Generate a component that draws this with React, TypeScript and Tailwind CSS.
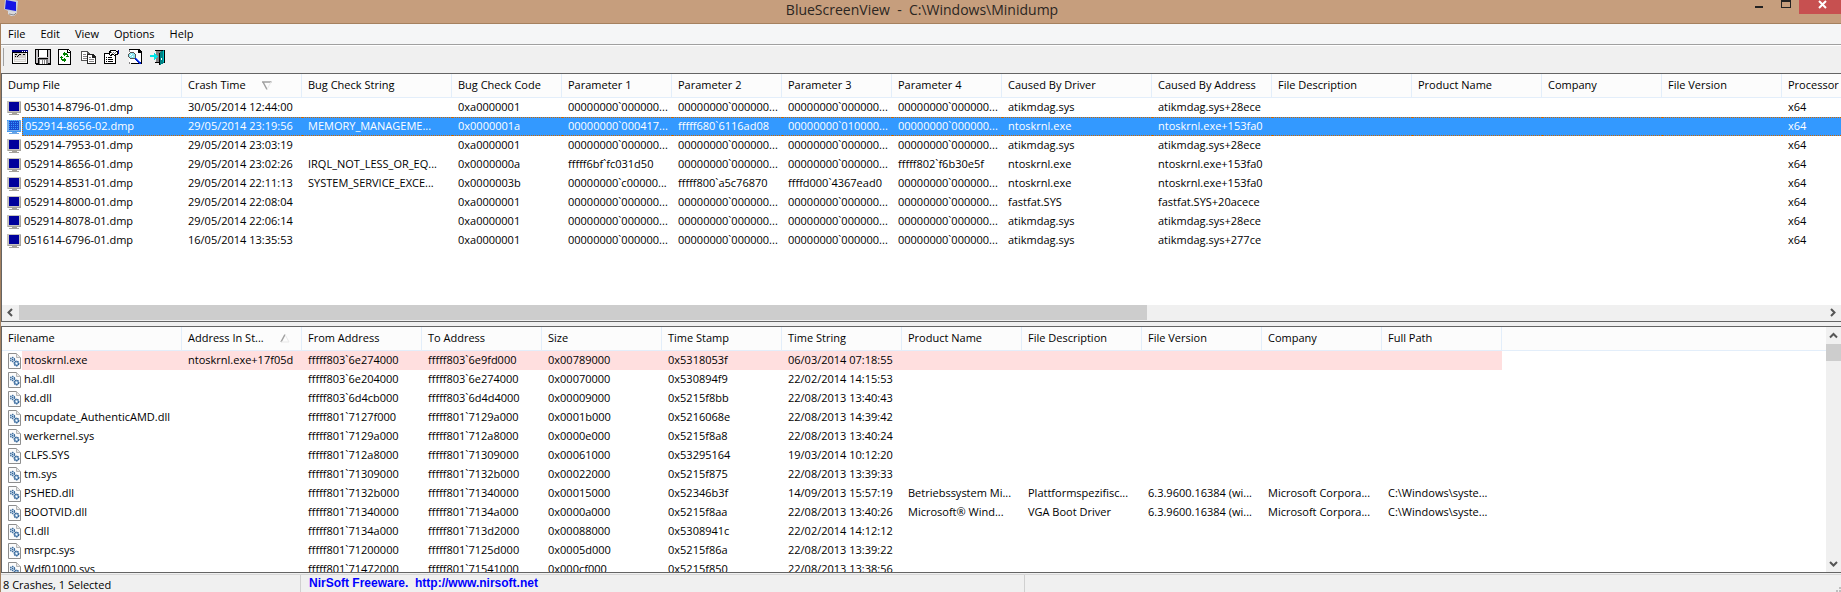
import type { ReactNode } from 'react';

type Column = { label: string; width?: string; sort?: 'asc' | 'desc' };

const crashColumns: Column[] = [
  { label: 'Dump File', width: 'w-[180px]' },
  { label: 'Crash Time', width: 'w-[120px]', sort: 'desc' },
  { label: 'Bug Check String', width: 'w-[150px]' },
  { label: 'Bug Check Code', width: 'w-[110px]' },
  { label: 'Parameter 1', width: 'w-[110px]' },
  { label: 'Parameter 2', width: 'w-[110px]' },
  { label: 'Parameter 3', width: 'w-[110px]' },
  { label: 'Parameter 4', width: 'w-[110px]' },
  { label: 'Caused By Driver', width: 'w-[150px]' },
  { label: 'Caused By Address', width: 'w-[120px]' },
  { label: 'File Description', width: 'w-[140px]' },
  { label: 'Product Name', width: 'w-[130px]' },
  { label: 'Company', width: 'w-[120px]' },
  { label: 'File Version', width: 'w-[120px]' },
  { label: 'Processor' },
];

const Z = '00000000`000000...';

const crashes = [
  ['053014-8796-01.dmp', '30/05/2014 12:44:00', '', '0xa0000001', Z, Z, Z, Z, 'atikmdag.sys', 'atikmdag.sys+28ece'],
  ['052914-8656-02.dmp', '29/05/2014 23:19:56', 'MEMORY_MANAGEME...', '0x0000001a', '00000000`000417...', 'fffff680`6116ad08', '00000000`010000...', Z, 'ntoskrnl.exe', 'ntoskrnl.exe+153fa0'],
  ['052914-7953-01.dmp', '29/05/2014 23:03:19', '', '0xa0000001', Z, Z, Z, Z, 'atikmdag.sys', 'atikmdag.sys+28ece'],
  ['052914-8656-01.dmp', '29/05/2014 23:02:26', 'IRQL_NOT_LESS_OR_EQ...', '0x0000000a', 'fffff6bf`fc031d50', Z, Z, 'fffff802`f6b30e5f', 'ntoskrnl.exe', 'ntoskrnl.exe+153fa0'],
  ['052914-8531-01.dmp', '29/05/2014 22:11:13', 'SYSTEM_SERVICE_EXCE...', '0x0000003b', '00000000`c00000...', 'fffff800`a5c76870', 'ffffd000`4367ead0', Z, 'ntoskrnl.exe', 'ntoskrnl.exe+153fa0'],
  ['052914-8000-01.dmp', '29/05/2014 22:08:04', '', '0xa0000001', Z, Z, Z, Z, 'fastfat.SYS', 'fastfat.SYS+20acece'],
  ['052914-8078-01.dmp', '29/05/2014 22:06:14', '', '0xa0000001', Z, Z, Z, Z, 'atikmdag.sys', 'atikmdag.sys+28ece'],
  ['051614-6796-01.dmp', '16/05/2014 13:35:53', '', '0xa0000001', Z, Z, Z, Z, 'atikmdag.sys', 'atikmdag.sys+277ce'],
].map((row) => [...row, '', '', '', '', 'x64']);

const driverColumns: Column[] = [
  { label: 'Filename', width: 'w-[180px]' },
  { label: 'Address In St...', width: 'w-[120px]', sort: 'asc' },
  { label: 'From Address', width: 'w-[120px]' },
  { label: 'To Address', width: 'w-[120px]' },
  { label: 'Size', width: 'w-[120px]' },
  { label: 'Time Stamp', width: 'w-[120px]' },
  { label: 'Time String', width: 'w-[120px]' },
  { label: 'Product Name', width: 'w-[120px]' },
  { label: 'File Description', width: 'w-[120px]' },
  { label: 'File Version', width: 'w-[120px]' },
  { label: 'Company', width: 'w-[120px]' },
  { label: 'Full Path', width: 'w-[120px]' },
];

const drivers = [
  ['ntoskrnl.exe', 'ntoskrnl.exe+17f05d', 'fffff803`6e274000', 'fffff803`6e9fd000', '0x00789000', '0x5318053f', '06/03/2014 07:18:55'],
  ['hal.dll', '', 'fffff803`6e204000', 'fffff803`6e274000', '0x00070000', '0x530894f9', '22/02/2014 14:15:53'],
  ['kd.dll', '', 'fffff803`6d4cb000', 'fffff803`6d4d4000', '0x00009000', '0x5215f8bb', '22/08/2013 13:40:43'],
  ['mcupdate_AuthenticAMD.dll', '', 'fffff801`7127f000', 'fffff801`7129a000', '0x0001b000', '0x5216068e', '22/08/2013 14:39:42'],
  ['werkernel.sys', '', 'fffff801`7129a000', 'fffff801`712a8000', '0x0000e000', '0x5215f8a8', '22/08/2013 13:40:24'],
  ['CLFS.SYS', '', 'fffff801`712a8000', 'fffff801`71309000', '0x00061000', '0x53295164', '19/03/2014 10:12:20'],
  ['tm.sys', '', 'fffff801`71309000', 'fffff801`7132b000', '0x00022000', '0x5215f875', '22/08/2013 13:39:33'],
  ['PSHED.dll', '', 'fffff801`7132b000', 'fffff801`71340000', '0x00015000', '0x52346b3f', '14/09/2013 15:57:19', 'Betriebssystem Mi...', 'Plattformspezifisc...', '6.3.9600.16384 (wi...', 'Microsoft Corpora...', 'C:\\Windows\\syste...'],
  ['BOOTVID.dll', '', 'fffff801`71340000', 'fffff801`7134a000', '0x0000a000', '0x5215f8aa', '22/08/2013 13:40:26', 'Microsoft® Wind...', 'VGA Boot Driver', '6.3.9600.16384 (wi...', 'Microsoft Corpora...', 'C:\\Windows\\syste...'],
  ['CI.dll', '', 'fffff801`7134a000', 'fffff801`713d2000', '0x00088000', '0x5308941c', '22/02/2014 14:12:12'],
  ['msrpc.sys', '', 'fffff801`71200000', 'fffff801`7125d000', '0x0005d000', '0x5215f86a', '22/08/2013 13:39:22'],
  ['Wdf01000.sys', '', 'fffff801`71472000', 'fffff801`71541000', '0x000cf000', '0x5215f850', '22/08/2013 13:38:56'],
];

const Icon = ({ children }: { children: ReactNode }) => (
  <svg width="16" height="16" viewBox="0 0 16 16" shapeRendering="crispEdges" className="shrink-0" aria-hidden="true">
    {children}
  </svg>
);

const MonitorIcon = ({ selected }: { selected?: boolean }) => (
  <Icon>
    <path d="M1 1h14v12H1z" fill={selected ? '#7ab0e6' : '#c6c3bd'} />
    <path d="M14 2h1v11H2v-1h12z" fill={selected ? '#5c9ade' : '#a5a29c'} />
    <path d="M3 2h10v9H3z" fill={selected ? '#1a4ccf' : '#00009c'} />
    <path d="M6 13h5v1h2v1H3v-1h3z" fill={selected ? '#6aa5e6' : '#a5a29c'} />
    {selected && (
      <path
        d="M3 3.5h10M3 5.5h10M3 7.5h10M3 9.5h10M1 1.5h14M1 12.5h14"
        stroke="#3399ff"
        strokeDasharray="1 1"
      />
    )}
  </Icon>
);

const DriverIcon = () => (
  <svg width="16" height="16" viewBox="0 0 16 16" className="shrink-0" aria-hidden="true">
    <path d="M2.5.5h8l4 4v11h-12z" fill="#fbfbfb" stroke="#8e8e8e" />
    <path d="M10.5.5v4h4" fill="#e8e8e8" stroke="#b5b5b5" />
    <circle cx="6.5" cy="6.5" r="2" fill="#dbe8f4" stroke="#3c6d9e" strokeWidth="1.4" strokeDasharray="1.4 .6" />
    <circle cx="6.5" cy="6.5" r=".7" fill="#2d5f94" />
    <circle cx="10.5" cy="10.5" r="2.2" fill="#a9c7e2" stroke="#2d5f94" strokeWidth="1.5" strokeDasharray="1.5 .5" />
    <circle cx="10.5" cy="10.5" r=".7" fill="#fff" />
  </svg>
);

const AppIcon = () => (
  <svg width="16" height="16" viewBox="0 0 16 16" aria-hidden="true">
    <path d="M5 11l8-1 1 3-3 3H8l-3-2z" fill="#d8d8dc" />
    <path d="M2 0h10l3 1-1 11-9-1-4-2z" fill="#c9cdd8" />
    <path d="M3 0l10 2v9L2 9z" fill="#1414e6" />
    <path d="M6 14l5 1 2-2" fill="none" stroke="#8c8c90" />
  </svg>
);

const tools = [
  {
    name: 'Advanced Options',
    icon: (
      <Icon>
        <path d="M0 1h16v14H0z" fill="#000" />
        <path d="M1 4h14v10H1z" fill="#fff" />
        <path d="M0 1h16v2H0z" fill="#000080" />
        <path d="M10 2h1v1h-1zM12 2h1v1h-1zM14 2h1v1h-1z" fill="#fff" />
        <path d="M2 4h12v9H2z" fill="#d6d3ce" />
        <path d="M3 5h2v1H3zM7 5h2v1H7zM11 5h2v1h-2zM6 6h1v1H6zM3 7h1v1H3zM5 7h1v1H5z" fill="#000" />
        <path d="M3 9h10v1H3zM3 11h10v1H3z" fill="#efefef" />
      </Icon>
    ),
  },
  {
    name: 'Save',
    icon: (
      <Icon>
        <path d="M0 0h16v16H1v-1H0z" fill="#000" />
        <path d="M1 1h2v13H1zM13 1h2v13h-2zM3 8h10v1H3z" fill="#c6c3c6" />
        <path d="M4 1h8v7H4z" fill="#fff" />
        <path d="M4 10h9v5H4z" fill="#848284" />
        <path d="M5 11h2v4H5zM8 11h1v4H8zM10 11h1v4h-1z" fill="#fff" />
      </Icon>
    ),
  },
  {
    name: 'Refresh',
    icon: (
      <Icon>
        <path d="M0 0h10l3 3v13H0z" fill="#000" />
        <path d="M1 1h8v3h3v11H1z" fill="#fff" />
        <path d="M10 1h1v1h1v1h-2z" fill="#fff" />
        <path d="M6 3h1v1h2v1h1v3H9V6H7v1H6V6H5V5h0V4h1zM3 7h1v3h2V9h1v1h1v2H7v1H6v-1H4v-1H3z" fill="#008200" />
        <path d="M8 7h3v1H8zM2 8h3v1H2z" fill="#008200" />
      </Icon>
    ),
  },
  {
    name: 'Copy Selected Items',
    icon: (
      <Icon>
        <path d="M0 2h6l3 3v7H0z" fill="#555" />
        <path d="M1 3h5v2h2v6H1z" fill="#fff" />
        <path d="M2 5h3v1H2zM2 7h5v1H2zM2 9h5v1H2z" fill="#848284" />
        <path d="M6 5h6l3 3v7H6z" fill="#222" />
        <path d="M7 6h4v3h3v5H7z" fill="#fff" />
        <path d="M8 8h2v1H8zM8 10h5v1H8zM8 12h5v1H8z" fill="#848284" />
      </Icon>
    ),
  },
  {
    name: 'Properties',
    icon: (
      <Icon>
        <path d="M0 4h12v11H0z" fill="#000" />
        <path d="M1 5h10v9H1z" fill="#fff" />
        <path d="M2 8h1v1H2zM4 8h4v1H4zM2 10h1v1H2zM4 10h5v1H4zM2 12h1v1H2zM4 12h5v1H4z" fill="#000" />
        <path d="M6 1h6v1h2v4h-2v1h-2V6H8v1H6V6H5V5H4V4h1V2h1z" fill="#000" />
        <path d="M7 2h5v1h1v2h-2v1h-1V5H7v1H6V4h1z" fill="#fff" />
        <path d="M7 3h1v1H7zM9 3h1v1H9zM11 3h1v1h-1zM8 4h1v1H8zM10 4h1v1h-1z" fill="#848284" />
        <path d="M14 1h1v4h-1z" fill="#000084" />
      </Icon>
    ),
  },
  {
    name: 'Find',
    icon: (
      <Icon>
        <path d="M2 0h10l3 3v12H4v-1h10V4h-3V1H2z" fill="#000" />
        <path d="M2 1h9v3h3v10H2z" fill="#fff" />
        <path d="M2 1h1v2H2zM2 13h1v2H2z" fill="#848284" />
        <path d="M3 3h4v1h1v1h1v4H8v1H3V9H2V8H1V5h1V4h1z" fill="#555" />
        <path d="M3 4h4v1h1v4H3V8H2V5h1z" fill="#8ce6f0" />
        <path d="M4 5h1v1H4zM5 7h1v1H5zM3 6h1v1H3z" fill="#fff" />
        <path d="M8 9h2v1h1v1h1v1h1v1h1v2h-2v-1h-1v-1h-1v-1H9v-1H8z" fill="#0020d6" />
        <path d="M9 9h1v1h1v1h1v1h1v1h-1v-1h-1v-1h-1v-1H9z" fill="#5a8cff" />
      </Icon>
    ),
  },
  {
    name: 'Exit',
    icon: (
      <Icon>
        <path d="M5 1h10v13H5v-1h1V2H5z" fill="#000" />
        <path d="M6 2h5v11H6z" fill="#848284" />
        <path d="M9 4l5-3v13l-4 2H9z" fill="#008284" />
        <path d="M9 4h1v12H9z" fill="#000" />
        <path d="M13 2h1v11h-1z" fill="#00c3c6" />
        <path d="M11 9h1v2h-1z" fill="#fff" />
        <path d="M0 6h4V4h1v1h1v1h1v1h1v1H7v1H6v1H5v1H4V8H0z" fill="#00e3e7" />
      </Icon>
    ),
  },
];

const Chevron = ({ d }: { d: string }) => (
  <svg width="9" height="9" viewBox="0 0 9 9" fill="none" stroke="#555" strokeWidth="2" aria-hidden="true">
    <path d={d} />
  </svg>
);

const SortMark = ({ sort }: { sort: 'asc' | 'desc' }) => (
  <svg width="10" height="9" viewBox="0 0 10 9" fill="none" className="shrink-0" aria-hidden="true">
    {sort === 'desc' ? (
      <>
        <path d="M0 1h9.5M1 1l4 7.5" stroke="#a0a0a0" strokeWidth="1.5" />
        <path d="M9 1L5 8.5" stroke="#e8e8e8" />
      </>
    ) : (
      <>
        <path d="M1 8l4-7.5" stroke="#a0a0a0" strokeWidth="1.5" />
        <path d="M5 .5L9 8H1" stroke="#e8e8e8" />
      </>
    )}
  </svg>
);

type ListProps = {
  label: string;
  columns: Column[];
  rows: string[][];
  filler?: boolean;
  selected?: number;
  marked?: number;
  icon: (selected: boolean) => ReactNode;
};

const ListView = ({ label, columns, rows, filler, selected, marked, icon }: ListProps) => {
  const cellStyle = (i: number) => {
    if (i === selected) return 'border-y border-dotted border-[#cc6600] bg-[#3399ff] text-white';
    if (i === marked) return 'bg-[#ffdfdf]';
    return '';
  };

  return (
    <table aria-label={label} className="w-full table-fixed border-separate border-spacing-0 leading-4">
      <colgroup>
        {columns.map((col) => (
          <col key={col.label} className={col.width} />
        ))}
        {filler && <col />}
      </colgroup>
      <thead>
        <tr className="h-6 bg-[#fcfcfc] text-left">
          {columns.map((col) => (
            <th
              key={col.label}
              className="overflow-hidden border-r border-b border-[#e3eefa] p-0 pb-px pl-1.5 font-normal whitespace-nowrap last:border-r-0"
            >
              <span className="flex items-center gap-4">
                {col.label}
                {col.sort && <SortMark sort={col.sort} />}
              </span>
            </th>
          ))}
          {filler && <th className="border-b border-[#e3eefa] p-0" />}
        </tr>
      </thead>
      <tbody>
        {rows.map((row, i) => (
          <tr key={row[0]} className="h-[19px] whitespace-nowrap">
            {columns.map((col, c) =>
              c === 0 ? (
                <td key={col.label} className="h-[19px] p-0 pl-1">
                  <div className="flex h-[19px] items-center">
                    {icon(i === selected)}
                    <span className={`flex h-full flex-1 items-center pb-px pl-0.5 ${i === selected ? 'border-l' : ''} ${cellStyle(i)}`}>
                      {row[0]}
                    </span>
                  </div>
                </td>
              ) : (
                <td key={col.label} className={`h-[19px] overflow-hidden p-0 pb-px pl-1.5 ${cellStyle(i)}`}>
                  {row[c]}
                </td>
              ),
            )}
            {filler && <td className="p-0" />}
          </tr>
        ))}
      </tbody>
    </table>
  );
};

const TitleBar = () => (
  <header className="flex h-6 shrink-0 items-start border-b border-[#a5815f] bg-[#c69e7d] text-[#2b2622]">
    <div className="flex flex-1 pl-[3px]">
      <AppIcon />
    </div>
    <h1 className="text-sm leading-[19px] whitespace-pre">BlueScreenView  -  C:\Windows\Minidump</h1>
    <div className="flex flex-1 justify-end">
      <button type="button" aria-label="Minimize" className="flex h-3.5 w-[27px] justify-center pt-1.5">
        <span className="h-0.5 w-2 bg-[#222]" />
      </button>
      <button type="button" aria-label="Maximize" className="flex h-3.5 w-[27px] justify-center">
        <span className="h-2 w-2.5 border border-t-2 border-[#222]" />
      </button>
      <button type="button" aria-label="Close" className="flex h-3.5 w-[42px] justify-center bg-[#c75050] pl-1">
        <svg width="9" height="9" viewBox="0 0 9 9" stroke="#fff" strokeWidth="2" aria-hidden="true">
          <path d="M1 1l7 7M8 1L1 8" />
        </svg>
      </button>
    </div>
  </header>
);

export default function App() {
  return (
    <div className="flex h-screen flex-col overflow-hidden bg-[#f0f0f0] font-['Open_Sans','Noto_Sans',sans-serif] text-[11px] text-black">
      <TitleBar />
      <div className="flex min-h-0 flex-1 flex-col border-l border-[#a5815f]">
        <nav className="flex h-[21px] shrink-0 items-center gap-px border-b border-[#a0a0a0] bg-[#f5f6f7]">
          {['File', 'Edit', 'View', 'Options', 'Help'].map((item) => (
            <button key={item} type="button" className="px-[7px] leading-4">
              {item}
            </button>
          ))}
        </nav>
        <div role="toolbar" className="flex h-7 shrink-0 items-center border-t border-white pb-[5px]">
          <span className="ml-0.5 h-[18px] w-px bg-[#a0a0a0]" />
          <div className="flex pl-2">
            {tools.map((tool) => (
              <button key={tool.name} type="button" aria-label={tool.name} className="w-[23px]">
                {tool.icon}
              </button>
            ))}
          </div>
        </div>

        <section className="flex h-[249px] shrink-0 flex-col border-y border-l border-[#646464] bg-white">
          <div className="min-h-0 flex-1 overflow-hidden">
            <ListView
              label="Crashes"
              columns={crashColumns}
              rows={crashes}
              selected={1}
              icon={(sel) => <MonitorIcon selected={sel} />}
            />
          </div>
          <div className="flex h-4 shrink-0 bg-[#f0f0f0] pb-px">
            <button type="button" aria-label="Scroll left" className="flex w-[17px] items-center justify-center">
              <Chevron d="M6 1L2.5 4.5L6 8" />
            </button>
            <div className="flex-1">
              <div className="h-full w-5/8 bg-[#cdcdcd]" />
            </div>
            <button type="button" aria-label="Scroll right" className="flex w-[17px] items-center justify-center">
              <Chevron d="M3 1L6.5 4.5L3 8" />
            </button>
          </div>
        </section>

        <section className="mt-1 flex min-h-0 flex-1 border-y border-l border-[#646464] bg-white">
          <div className="min-w-0 flex-1 overflow-hidden">
            <ListView
              label="Drivers"
              columns={driverColumns}
              rows={drivers}
              filler
              marked={0}
              icon={() => <DriverIcon />}
            />
          </div>
          <div className="flex w-[15px] shrink-0 flex-col bg-[#f0f0f0]">
            <button type="button" aria-label="Scroll up" className="flex h-[17px] items-center justify-center">
              <Chevron d="M1 6.5L4.5 3L8 6.5" />
            </button>
            <div className="flex-1">
              <div className="h-[17px] bg-[#cdcdcd]" />
            </div>
            <button type="button" aria-label="Scroll down" className="flex h-[17px] items-center justify-center">
              <Chevron d="M1 3L4.5 6.5L8 3" />
            </button>
          </div>
        </section>

        <footer className="mt-px flex h-[18px] shrink-0 border-t border-[#d7d7d7] leading-4">
          <div className="w-[300px] border-r border-[#d0d0d0] pt-0.5 pl-0.5">8 Crashes, 1 Selected</div>
          <div className="w-[724px] border-r border-[#d0d0d0] pl-2 font-['Liberation_Sans',Arial,sans-serif] text-xs leading-4 font-bold text-[#0000ff]">
            <a href="#nirsoft" className="whitespace-pre">NirSoft Freeware.  http://www.nirsoft.net</a>
          </div>
          <div className="flex flex-1 items-end justify-end">
            <svg width="5" height="5" viewBox="0 0 5 5" fill="#bfbfbf" aria-hidden="true">
              <path d="M3 0h2v2H3zM0 3h2v2H0zM3 3h2v2H3z" />
            </svg>
          </div>
        </footer>
      </div>
    </div>
  );
}
